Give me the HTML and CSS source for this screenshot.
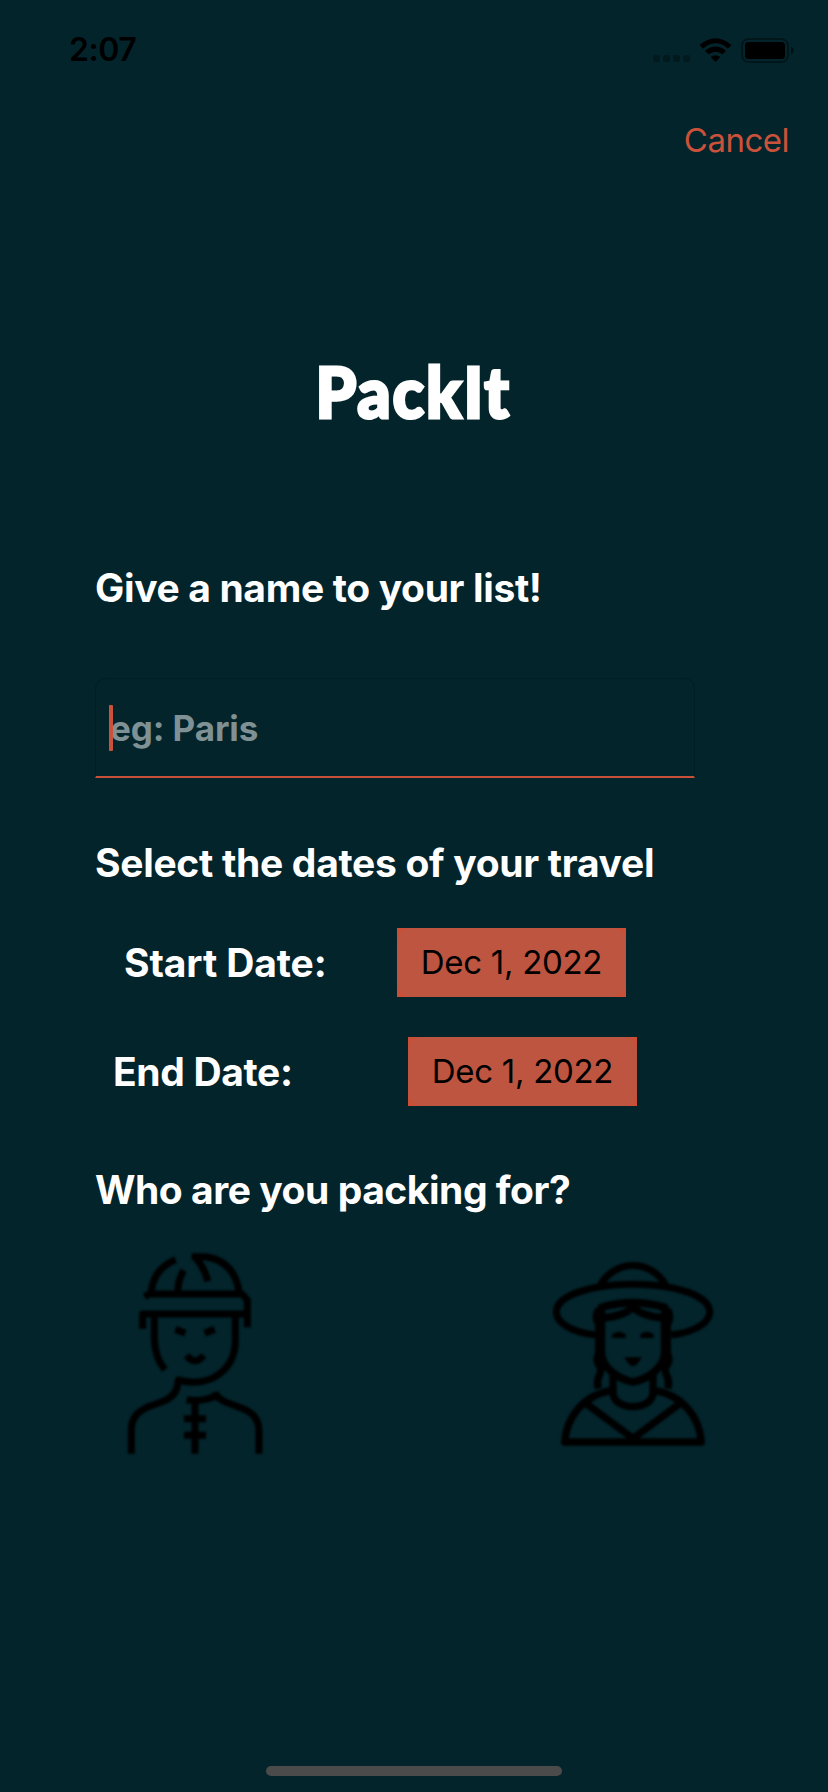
FILE: index.html
```html
<!DOCTYPE html>
<html lang="en">
<head>
<meta charset="utf-8">
<title>PackIt</title>
<link rel="stylesheet" href="styles.css">
</head>
<body>
<div class="screen">
  <header class="status">
    <span class="time">2:07</span>
    <svg class="indicators" width="142" height="26" viewBox="652 36 142 26">
      <g opacity=".3"><rect x="653" y="54" width="7" height="7" rx="2.500"/><rect x="663" y="54" width="7" height="7" rx="2.500"/><rect x="673" y="54" width="7" height="7" rx="2.500"/><rect x="683" y="54" width="7" height="7" rx="2.500"/></g>
      <path d="M699.500 44Q715.500 30.500 731.500 44L728 47.700Q715.500 37 703 47.700ZM705 49.700Q715.500 41.500 726 49.700L722.500 53.300Q715.500 48 708.500 53.300ZM710.800 56Q715.500 52.500 720.200 56L715.500 61Z"/>
      <rect x="742" y="38" width="46" height="23" rx="6.500" fill="none" stroke="#000" stroke-width="2" opacity=".38"/>
      <rect x="745" y="41" width="40" height="17" rx="3.500"/>
      <path d="M791 45.500Q793.800 47 793.800 49.500T791 53.500Z" opacity=".5"/>
    </svg>
  </header>
  <nav class="nav"><a class="cancel">Cancel</a></nav>
  <h1 class="brand"><span class="brand-text">PackIt</span></h1>
  <main class="form">
    <h2 class="heading h-name">Give a name to your list!</h2>
    <div class="field"><span class="caret"></span><span class="placeholder">eg: Paris</span></div>
    <h2 class="heading h-dates">Select the dates of your travel</h2>
    <div class="row start"><span class="heading label-start">Start Date:</span><div class="picker"><span class="pill">Dec 1, 2022</span></div></div>
    <div class="row end"><span class="heading label-end">End Date:</span><div class="picker"><span class="pill">Dec 1, 2022</span></div></div>
    <h2 class="heading h-who">Who are you packing for?</h2>
    <div class="people">
      <svg class="person" width="170" height="230" viewBox="0 0 510 690">
        <g class="lines man">
          <path d="M104 170L123 159Q130 85 197 59M123 162H396L412 180V262M98 266V222H412M203 158Q204 119 221 91M294 124Q282 82 259 55M245 50H286Q374 62 388 159"/>
          <path d="M133 225V294Q134 353 165 389M376 225V300C376 386 305 446 205 420Q203 465 164 482L111 502Q64 523 64 569V641M315 456Q319 473 348 487L394 504Q447 523 447 573V641M230 479Q282 487 322 465M255 480V641M222 536H288M222 586H288M196 268L226 280M314 268L284 280M230 346Q255 379 281 346"/>
        </g>
      </svg>
      <svg class="person" width="190" height="230" viewBox="0 0 570 690">
        <g class="lines woman">
          <path d="M165 285C92 276 49 247 49 216C49 168 148 133 279 133S509 168 509 216C509 248 465 276 394 285M181 135C226 57 332 57 377 135"/>
          <path d="M184 335V202Q278 174 374 202V335C374 384 321 418 279 426C237 418 184 384 184 335M181 235Q265 227 279 196Q293 227 377 235" stroke-width="23"/>
          <path d="M176 208Q162 233 176 251V340Q165 361 180 380Q186 392 176 410Q170 425 174 446M382 208Q396 233 382 251V340Q393 361 378 380Q372 392 382 410Q388 425 384 446M219 395V458C220 514 338 514 339 458V395M212 452C125 468 80 535 74 606H484C478 535 433 468 346 452M136 489L279 595L422 489" stroke-width="22"/>
          <path d="M217 294V283Q237 267 257 283V294ZM301 294V283Q321 267 341 283V294ZM253 352H305Q279 404 253 352Z" fill="#000" stroke="none"/>
        </g>
      </svg>
    </div>
  </main>
  <footer class="home"><span class="home-bar"></span></footer>
</div>
</body>
</html>
```
FILE: styles.css
```css
body { margin: 0; background: #03242b; font-family: Inter, "Liberation Sans", sans-serif; }
.screen { width: 828px; height: 1792px; display: flex; flex-direction: column; background: #03242b; overflow: hidden; }
.status { height: 99px; box-sizing: border-box; padding: 0 34px 0 69px; display: flex; align-items: center; justify-content: space-between; color: #000; }
.time { font-size: 32px; font-weight: 600; letter-spacing: -0.5px; }
.nav { height: 40px; padding: 21px 39px 0 0; display: flex; justify-content: flex-end; }
.cancel { color: #cb523a; font-size: 33px; line-height: 40px; letter-spacing: -0.5px; }
.brand { margin: 181px 0 0; padding-right: 2px; height: 101px; display: flex; justify-content: center; color: #fff; }
.brand-text { display: block; font: 900 71px/100px Lato, sans-serif; letter-spacing: 2px; -webkit-text-stroke: 3px #fff; transform: scaleX(0.92); }
.form { display: flex; flex-direction: column; padding: 0 95px; }
.heading { margin: 0; color: #fff; font-size: 39px; font-weight: 700; line-height: 48px; white-space: nowrap; letter-spacing: -0.35px; }
.h-name { margin-top: 122px; }
.field { width: 600px; height: 100px; box-sizing: border-box; margin-top: 66px; padding-left: 13px; display: flex; align-items: center; border: 1px solid #021e25; border-bottom: 2px solid #c84f38; border-radius: 10px 10px 0 0; }
.caret { width: 4px; height: 46px; border-radius: 1px; background: #cb523a; position: relative; z-index: 1; }
.placeholder { margin-left: -3px; color: #7f9194; font-size: 35px; font-weight: 700; line-height: 48px; letter-spacing: -0.1px; }
.h-dates { margin-top: 61px; letter-spacing: -0.3px; }
.row { height: 69px; display: flex; align-items: center; }
.start { margin-top: 41px; padding-left: 29px; }
.end { margin-top: 40px; padding-left: 18px; }
.label-start { width: 273px; letter-spacing: -0.1px; }
.label-end { width: 295px; }
.picker { width: 229px; height: 69px; background: #c94f37; }
.pill { display: block; height: 69px; border-radius: 14px; background: #be5540; color: #000; font-size: 33px; line-height: 69px; text-align: center; white-space: nowrap; letter-spacing: -0.3px; }
.h-who { margin-top: 60px; letter-spacing: -0.46px; }
.people { display: flex; justify-content: space-between; margin: 26px 3px 0 15px; }
.lines { fill: none; stroke: #000; stroke-width: 21; stroke-linejoin: round; filter: blur(2.5px); }
.home { margin-top: auto; padding-bottom: 16px; display: flex; justify-content: center; }
.home-bar { width: 296px; height: 10px; border-radius: 5px; background: #4b4b4b; }
```
